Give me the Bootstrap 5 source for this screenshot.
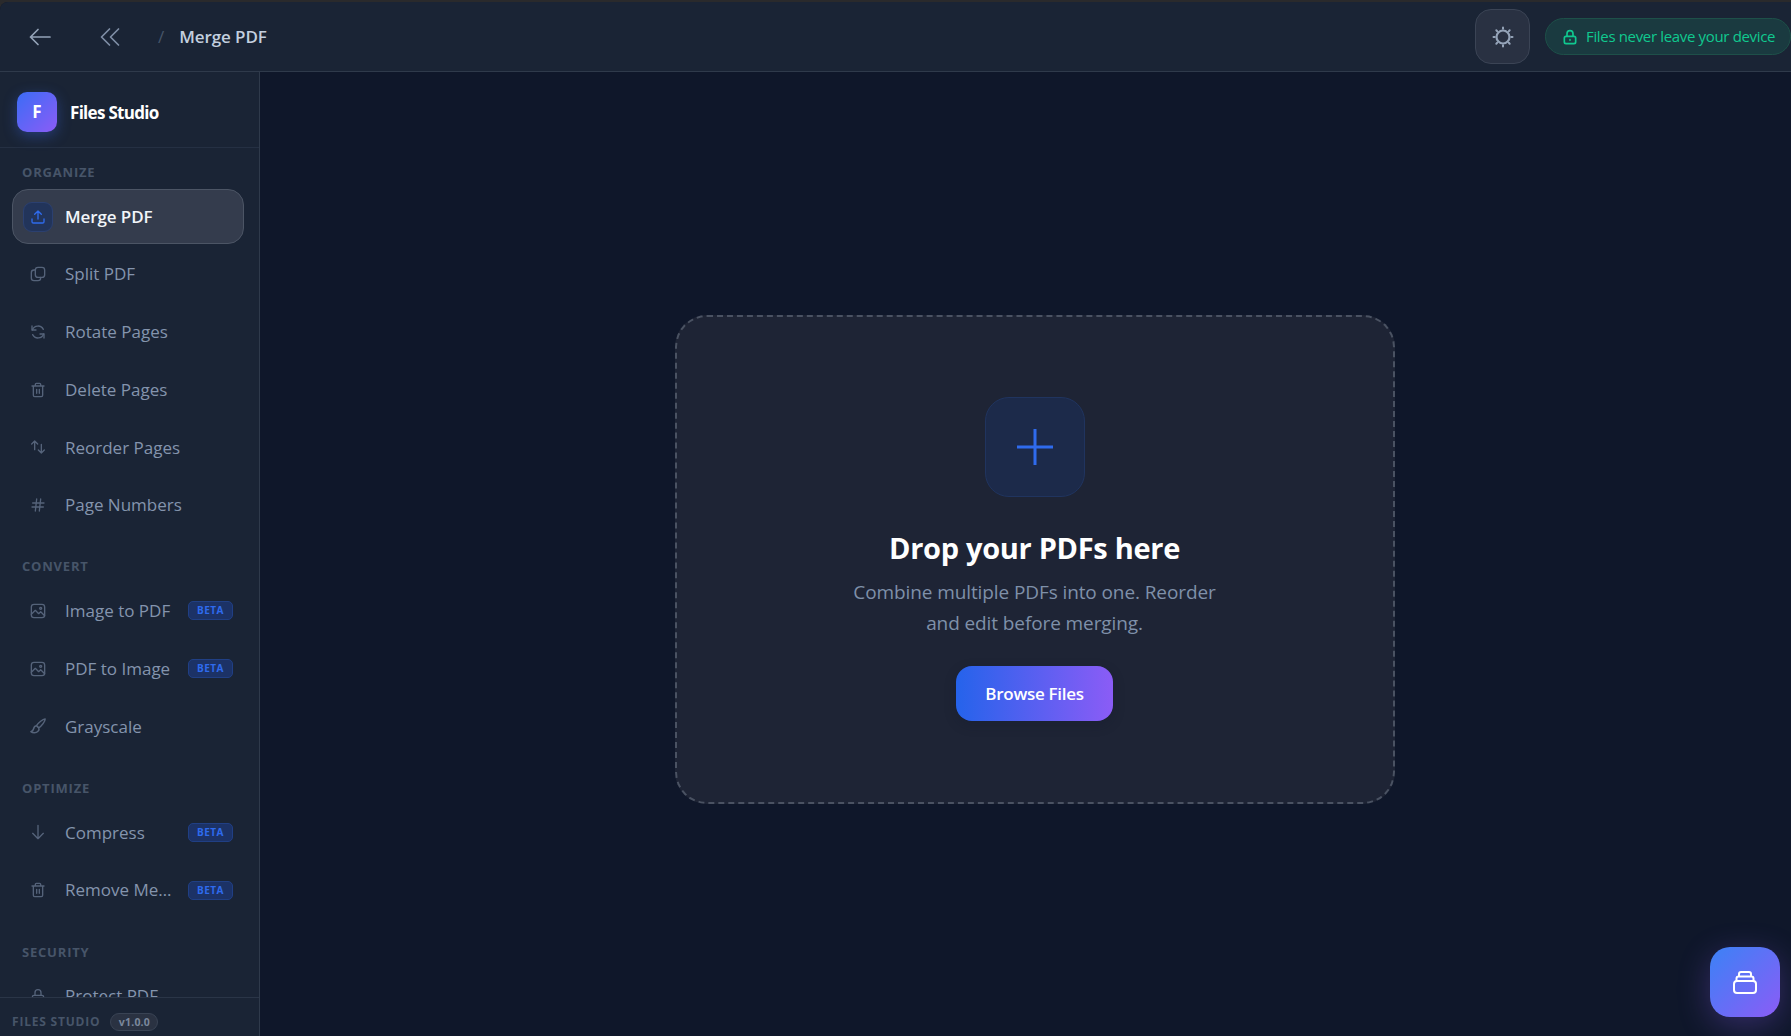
<!DOCTYPE html>
<html lang="en">
<head>
<meta charset="UTF-8">
<meta name="viewport" content="width=device-width, initial-scale=1.0">
<title>Merge PDF - Files Studio</title>
<link rel="stylesheet" href="https://cdn.jsdelivr.net/npm/bootstrap@5.3.0/dist/css/bootstrap.min.css">
<style>
html, body { height: 100%; }
body {
    font-family: "Open Sans", "Noto Sans", sans-serif;
    background-color: #0f172a;
    color: #94a3b8;
    overflow: hidden;
}
svg { display: block; fill: none; stroke: currentColor; stroke-width: 2; stroke-linecap: round; stroke-linejoin: round; }

.app-shell { height: 100vh; background: #2a2a2c; padding-top: 2px; }
.app-frame { height: 100%; background: #0f172a; border-top-left-radius: 8px; overflow: hidden; }

.top-bar {
    height: 70px;
    flex: none;
    background: #1a2435;
    border-bottom: 1px solid #2f3a4b;
}
.bar-back { color: #94a3b8; margin-left: 28px; }
.bar-collapse { color: #7f8ea6; margin-left: 48px; }
.bar-back svg, .bar-collapse svg { stroke-width: 1.7; }
.bar-slash { color: #475569; margin-left: 38px; font-size: 17px; }
.bar-title { color: #c3cfdf; margin-left: 15px; font-size: 17px; font-weight: 600; letter-spacing: -.1px; }
.theme-btn {
    width: 55px;
    height: 55px;
    border-radius: 16px;
    background: #293142;
    border: 1px solid #3b4455;
    color: #94a3b8;
}
.theme-btn circle { stroke-width: 2.2; }
.safe-pill {
    width: 246px;
    height: 37px;
    margin: 0 0 0 15px;
    padding-left: 16px;
    border-radius: 19px;
    background: #1a3a40;
    border: 1px solid #1e5049;
    color: #10c98f;
    font-size: 15px;
    letter-spacing: -.34px;
    white-space: nowrap;
}
.safe-pill svg { stroke-width: 2.5; }

.side-bar {
    width: 260px;
    flex: none;
    background: #1a2435;
    border-right: 1px solid #2f3a4b;
}
.brand-row { height: 76px; flex: none; padding: 6px 0 0 17px; border-bottom: 1px solid #253043; }
.brand-logo {
    width: 40px;
    height: 40px;
    margin-top: -1px;
    border-radius: 10px;
    background: linear-gradient(135deg, #3b6cf6, #8b5cf6);
    box-shadow: 0 4px 14px rgba(59, 108, 246, .35);
    color: #fff;
    font-size: 17px;
    font-weight: 700;
}
.brand-name { color: #fff; font-size: 17px; font-weight: 700; letter-spacing: -.7px; margin-left: 13px; }

.side-scroll { flex: 1 1 0; min-height: 0; overflow: hidden; padding: 16px 15px 0 12px; }
.nav-group { margin-bottom: 26px; }
.nav-label {
    height: 16px;
    line-height: 16px;
    margin: 0 0 9px 10px;
    color: #475569;
    font-size: 13px;
    font-weight: 700;
    letter-spacing: .8px;
}
.nav-entry {
    height: 55px;
    margin-bottom: 2.7px;
    padding: 0 10px;
    gap: 12px;
    border: 1px solid transparent;
    border-radius: 16px;
    color: #8494ad;
    font-size: 17px;
    font-weight: 500;
    letter-spacing: 0;
}
.nav-entry.is-active { background: #343c4d; border-color: #4c5565; color: #f1f5f9; font-weight: 600; letter-spacing: -.1px; }
.nav-ico { width: 30px; height: 30px; flex: none; color: #55637a; border-radius: 9px; border: 1px solid transparent; }
.is-active .nav-ico { background: #22345a; border-color: #2b4070; color: #2f6bed; }
.beta-tag {
    flex: none;
    width: 45px;
    height: 19px;
    line-height: 17px;
    text-align: center;
    border-radius: 5px;
    background: #1c3266;
    border: 1px solid #203f84;
    color: #2f6bed;
    font-size: 10px;
    font-weight: 700;
    letter-spacing: .5px;
}

.side-foot {
    height: 39px;
    flex: none;
    padding: 10px 0 0 12px;
    gap: 10px;
    border-top: 1px solid #2a3547;
    color: #475569;
    font-size: 12px;
    font-weight: 700;
    letter-spacing: .8px;
}
.ver-tag {
    width: 48px;
    height: 18px;
    line-height: 16px;
    text-align: center;
    border-radius: 9px;
    background: #2a3242;
    border: 1px solid #394354;
    color: #7b889c;
    font-size: 10.5px;
    letter-spacing: .2px;
}

.work-area { padding: 11px 0 0 18px; }
.drop-zone {
    width: 720px;
    height: 489px;
    padding-top: 80px;
    background: #1e2435;
    border: 2px dashed #4a5262;
    border-radius: 32px;
}
.plus-box {
    width: 100px;
    height: 100px;
    border-radius: 24px;
    background: #1c2a4a;
    border: 1px solid #20345f;
    color: #2f6bed;
}
.plus-box svg { stroke-width: 3; stroke-linecap: butt; }
.drop-title { margin: 32px 0 0; color: #fff; font-size: 29px; font-weight: 700; line-height: 38px; letter-spacing: -.3px; }
.drop-text { width: 376px; margin: 10px 0 0; color: #7f90a9; font-size: 19px; line-height: 31px; letter-spacing: -.1px; text-align: center; }
.browse-btn {
    width: 157px;
    height: 55px;
    margin-top: 27px;
    border: 0;
    border-radius: 16px;
    background: linear-gradient(90deg, #2563eb, #8b5cf6);
    box-shadow: 0 4px 12px rgba(15, 23, 42, .25);
    color: #fff;
    font-size: 17px;
    font-weight: 600;
    letter-spacing: -.3px;
}
.browse-btn:hover { background: linear-gradient(90deg, #2563eb, #8b5cf6); color: #fff; }

.float-btn {
    position: absolute;
    right: 11px;
    bottom: 19px;
    width: 70px;
    height: 70px;
    border: 0;
    border-radius: 20px;
    background: linear-gradient(135deg, #3b82f6, #8b5cf6);
    box-shadow: 0 8px 32px rgba(139, 92, 246, .3);
    color: #fff;
}
</style>
</head>
<body>
<div class="app-shell">
<div class="app-frame d-flex flex-column position-relative">

    <header class="top-bar d-flex align-items-center">
        <span class="bar-back"><svg width="24" height="24" viewBox="0 0 24 24"><path d="M22 12H2.500M10 4.500 2.500 12l7.500 7.500"/></svg></span>
        <span class="bar-collapse"><svg width="20" height="20" viewBox="0 0 20 20"><path d="M9.500 2 1.500 10l8 8M18.500 2l-8 8 8 8"/></svg></span>
        <span class="bar-slash">/</span>
        <span class="bar-title">Merge PDF</span>
        <div class="ms-auto d-flex align-items-center">
            <button class="theme-btn btn p-0 d-flex align-items-center justify-content-center" type="button" aria-label="Theme">
                <svg width="22" height="22" viewBox="0 0 22 22"><circle cx="11" cy="11" r="6.500"/><path d="M11 1.500v1.200M11 19.300v1.200M1.500 11h1.200M19.300 11h1.200M4.300 4.300l.9.9M16.800 16.800l.9.9M4.300 17.700l.9-.9M16.800 5.200l.9-.9"/></svg>
            </button>
            <div class="safe-pill d-flex align-items-center gap-2">
                <svg width="16" height="16" viewBox="0 0 24 24"><rect x="3.500" y="11" width="17" height="11" rx="2.500"/><path d="M7.500 11V7a4.500 4.500 0 0 1 9 0v4M12 16v1"/></svg>
                <span>Files never leave your device</span>
            </div>
        </div>
    </header>

    <div class="d-flex flex-grow-1" style="min-height:0">
        <aside class="side-bar d-flex flex-column">
            <div class="brand-row d-flex align-items-center">
                <div class="brand-logo d-flex align-items-center justify-content-center">F</div>
                <div class="brand-name">Files Studio</div>
            </div>

            <nav class="side-scroll">
                <div class="nav-group">
                    <div class="nav-label">ORGANIZE</div>
                    <div class="nav-entry is-active d-flex align-items-center">
                        <span class="nav-ico d-flex align-items-center justify-content-center"><svg width="16" height="16" viewBox="0 0 24 24"><path d="M3 15v4a2 2 0 0 0 2 2h14a2 2 0 0 0 2-2v-4M12 15V3M7 8l5-5 5 5"/></svg></span>
                        <span>Merge PDF</span>
                    </div>
                    <div class="nav-entry d-flex align-items-center">
                        <span class="nav-ico d-flex align-items-center justify-content-center"><svg width="16" height="16" viewBox="0 0 24 24"><rect x="8" y="2" width="14" height="15" rx="4"/><path d="M8 6H6a4 4 0 0 0-4 4v8a4 4 0 0 0 4 4h6a4 4 0 0 0 4-4v-1"/></svg></span>
                        <span>Split PDF</span>
                    </div>
                    <div class="nav-entry d-flex align-items-center">
                        <span class="nav-ico d-flex align-items-center justify-content-center"><svg width="16" height="16" viewBox="0 0 24 24"><path d="M3 3v6h6M21 21v-6h-6"/><path d="M3.500 9A9 9 0 0 1 20 8M20.500 15A9 9 0 0 1 4 16"/></svg></span>
                        <span>Rotate Pages</span>
                    </div>
                    <div class="nav-entry d-flex align-items-center">
                        <span class="nav-ico d-flex align-items-center justify-content-center"><svg width="16" height="16" viewBox="0 0 24 24"><path d="M3 6h18M8 6V3.500A1.500 1.500 0 0 1 9.500 2h5A1.500 1.500 0 0 1 16 3.500V6M5 6v14a2 2 0 0 0 2 2h10a2 2 0 0 0 2-2V6M10 11v6M14 11v6"/></svg></span>
                        <span>Delete Pages</span>
                    </div>
                    <div class="nav-entry d-flex align-items-center">
                        <span class="nav-ico d-flex align-items-center justify-content-center"><svg width="16" height="16" viewBox="0 0 24 24"><path d="M7 16V3M2.500 7.500 7 3l4.500 4.500M17 8v13M12.500 16.500 17 21l4.500-4.500"/></svg></span>
                        <span>Reorder Pages</span>
                    </div>
                    <div class="nav-entry d-flex align-items-center">
                        <span class="nav-ico d-flex align-items-center justify-content-center"><svg width="16" height="16" viewBox="0 0 24 24"><path d="M4 9h17M3 15h17M10 3 8 21M16 3l-2 18"/></svg></span>
                        <span>Page Numbers</span>
                    </div>
                </div>

                <div class="nav-group">
                    <div class="nav-label">CONVERT</div>
                    <div class="nav-entry d-flex align-items-center">
                        <span class="nav-ico d-flex align-items-center justify-content-center"><svg width="16" height="16" viewBox="0 0 24 24"><rect x="2" y="2" width="20" height="20" rx="4"/><circle cx="16" cy="8" r="1.500"/><path d="m2 17 6-6 5 5 3-3 6 6"/></svg></span>
                        <span class="flex-grow-1 text-truncate">Image to PDF</span>
                        <span class="beta-tag">BETA</span>
                    </div>
                    <div class="nav-entry d-flex align-items-center">
                        <span class="nav-ico d-flex align-items-center justify-content-center"><svg width="16" height="16" viewBox="0 0 24 24"><rect x="2" y="2" width="20" height="20" rx="4"/><circle cx="16" cy="8" r="1.500"/><path d="m2 17 6-6 5 5 3-3 6 6"/></svg></span>
                        <span class="flex-grow-1 text-truncate">PDF to Image</span>
                        <span class="beta-tag">BETA</span>
                    </div>
                    <div class="nav-entry d-flex align-items-center">
                        <span class="nav-ico d-flex align-items-center justify-content-center"><svg width="18" height="18" viewBox="0 0 24 24"><path d="M21.500 2.500c-3 .5-9 5-11.500 9l3 3c4-2.500 8.500-8.500 8.500-12zM10 11.500c-3 0-3.500 2-4 4.500-.3 1.500-2 3-3.500 3.500 2.500 2 7 2 9.500-.5 2-2 1.500-3.500 1-4.500"/></svg></span>
                        <span class="flex-grow-1 text-truncate">Grayscale</span>
                    </div>
                </div>

                <div class="nav-group">
                    <div class="nav-label">OPTIMIZE</div>
                    <div class="nav-entry d-flex align-items-center">
                        <span class="nav-ico d-flex align-items-center justify-content-center"><svg width="16" height="16" viewBox="0 0 24 24"><path d="M12 2v20M4 14l8 8 8-8"/></svg></span>
                        <span class="flex-grow-1 text-truncate">Compress</span>
                        <span class="beta-tag">BETA</span>
                    </div>
                    <div class="nav-entry d-flex align-items-center">
                        <span class="nav-ico d-flex align-items-center justify-content-center"><svg width="16" height="16" viewBox="0 0 24 24"><path d="M3 6h18M8 6V3.500A1.500 1.500 0 0 1 9.500 2h5A1.500 1.500 0 0 1 16 3.500V6M5 6v14a2 2 0 0 0 2 2h10a2 2 0 0 0 2-2V6M10 11v6M14 11v6"/></svg></span>
                        <span class="flex-grow-1 text-truncate">Remove Metadata</span>
                        <span class="beta-tag">BETA</span>
                    </div>
                </div>

                <div class="nav-group">
                    <div class="nav-label">SECURITY</div>
                    <div class="nav-entry d-flex align-items-center">
                        <span class="nav-ico d-flex align-items-center justify-content-center"><svg width="16" height="16" viewBox="0 0 24 24"><rect x="3.500" y="11" width="17" height="11" rx="2.500"/><path d="M7.500 11V7a4.500 4.500 0 0 1 9 0v4"/></svg></span>
                        <span class="flex-grow-1 text-truncate">Protect PDF</span>
                    </div>
                </div>
            </nav>

            <div class="side-foot d-flex align-items-center">
                <span>FILES STUDIO</span>
                <span class="ver-tag">v1.0.0</span>
            </div>
        </aside>

        <main class="work-area flex-grow-1 d-flex align-items-center justify-content-center">
            <section class="drop-zone d-flex flex-column align-items-center">
                <div class="plus-box d-flex align-items-center justify-content-center">
                    <svg width="36" height="36" viewBox="0 0 36 36"><path d="M18 0v36M0 18h36"/></svg>
                </div>
                <h2 class="drop-title">Drop your PDFs here</h2>
                <p class="drop-text">Combine multiple PDFs into one. Reorder and edit before merging.</p>
                <button class="browse-btn btn p-0" type="button">Browse Files</button>
            </section>
        </main>
    </div>

    <button class="float-btn d-flex align-items-center justify-content-center p-0" type="button" aria-label="Files">
        <svg width="26" height="26" viewBox="0 0 26 26"><rect x="2" y="12" width="22" height="12" rx="3"/><path d="M4.500 12V9.500A2 2 0 0 1 6.500 7.500h13a2 2 0 0 1 2 2V12M7 7.500V5a2 2 0 0 1 2-2h8a2 2 0 0 1 2 2v2.500"/></svg>
    </button>
</div>
</div>
<script src="https://cdn.jsdelivr.net/npm/bootstrap@5.3.0/dist/js/bootstrap.bundle.min.js"></script>
</body>
</html>
